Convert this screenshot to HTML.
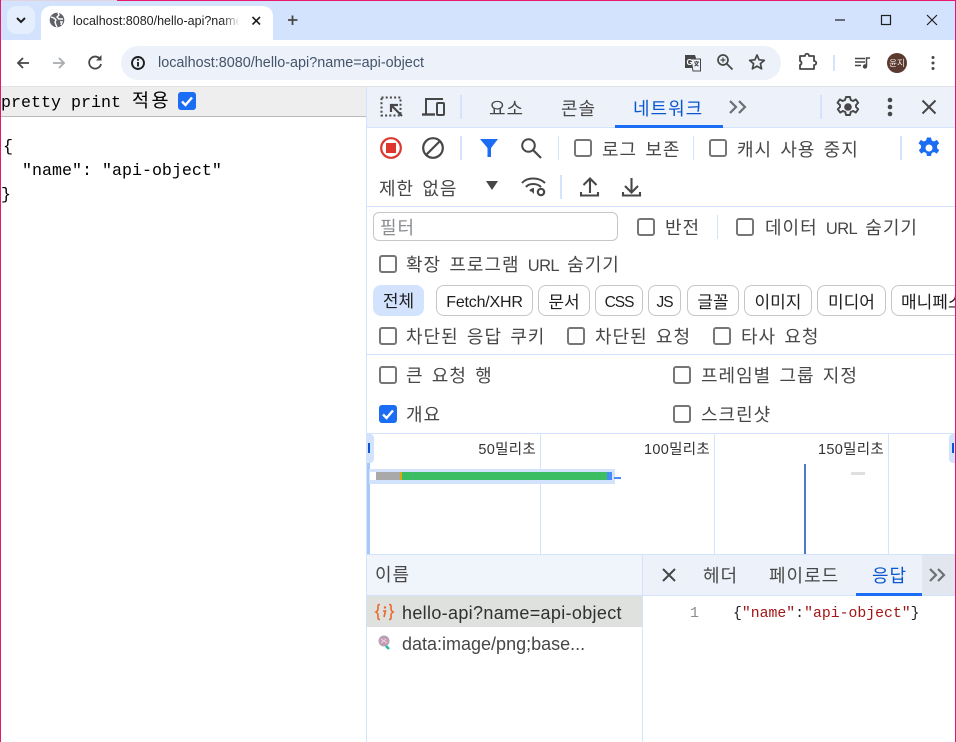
<!DOCTYPE html>
<html><head><meta charset="utf-8"><style>
html,body{margin:0;padding:0;background:#fff}
#r{position:relative;width:956px;height:742px;overflow:hidden;background:#fff;font-family:"Liberation Sans","Noto Sans CJK KR",sans-serif}
.b{position:absolute}
.t{position:absolute;white-space:nowrap;font-size:17px;line-height:24px;color:#474747;font-family:"Liberation Sans","Noto Sans CJK KR",sans-serif}
.h{font-size:18px;letter-spacing:1px;word-spacing:2.2px;margin-top:2px}
.u{font-size:16.5px;letter-spacing:-.6px}
.m{font-family:"Liberation Mono",monospace;font-size:16.67px;color:#000}
.c{position:absolute;width:14px;height:14px;border:2px solid #767676;border-radius:3px;background:#fff}
.k{position:absolute;width:18px;height:18px;border-radius:3px;background:#1b6ef3}
.s{position:absolute;width:2px;background:#d3e3fd}
.chip{position:absolute;top:285px;height:29px;border:1px solid #c4c7c5;border-radius:8px;text-align:center;font-size:17px;line-height:33px;color:#1f1f1f;white-space:nowrap;overflow:hidden;box-sizing:content-box}
.l{font-size:15.5px;letter-spacing:-1px}
.tm{font-size:14.5px;line-height:20px;color:#333;letter-spacing:.3px;top:440px}
svg{position:absolute;overflow:visible}
</style></head><body><div id="r">
<div class="b" style="left:0;top:0;width:956px;height:40px;background:#d3e3fd"></div>
<div class="b" style="left:0;top:0;width:117px;height:1px;background:#e2d3e0"></div>
<div class="b" style="left:117px;top:0;width:839px;height:1px;background:#e8186c"></div>
<div class="b" style="left:7px;top:6px;width:28px;height:28px;border-radius:9px;background:#e4eefc"></div>
<svg style="left:0;top:0" width="60" height="40"><path d="M17 18l4 4 4-4" fill="none" stroke="#1f1f1f" stroke-width="2"/></svg>
<div class="b" style="left:41px;top:6px;width:232px;height:40px;border-radius:10px 10px 0 0;background:#fff"></div>
<svg style="left:49px;top:12px" width="16" height="16" viewBox="0 0 16 16"><circle cx="8" cy="8" r="7.3" fill="#5f6368"/><path d="M2 5l3 1 2 2-1 2 1 3 1 2M9 1l1 2-2 2 2 2 4 0M11 10l2 0-1 3" fill="none" stroke="#fff" stroke-width="1.4"/></svg>
<div class="t" style="left:73px;top:10px;width:166px;overflow:hidden;font-size:12.5px;line-height:22px;color:#1f1f1f">localhost:8080/hello-api?name=api-object</div>
<div class="b" style="left:222px;top:10px;width:18px;height:22px;background:linear-gradient(90deg,rgba(255,255,255,0),#fff)"></div>
<svg style="left:250px;top:14px" width="14" height="14"><path d="M2.500 3l7.500 7.500M10 3l-7.500 7.500" stroke="#1f1f1f" stroke-width="1.600"/></svg>
<svg style="left:286px;top:13px" width="14" height="14"><path d="M6.500 2.500v9.500M2 7h9.500" stroke="#474747" stroke-width="1.800"/></svg>
<svg style="left:830px;top:0" width="126" height="40"><path d="M5 20h10" stroke="#1f1f1f" stroke-width="1.2"/><rect x="51.500" y="15.500" width="9" height="9" fill="none" stroke="#1f1f1f" stroke-width="1.2"/><path d="M97 15l10 10M107 15l-10 10" stroke="#1f1f1f" stroke-width="1.2"/></svg>
<div class="b" style="left:0;top:40px;width:956px;height:46px;background:#fff;border-radius:10px 10px 0 0"></div>
<div class="b" style="left:0;top:40px;width:10px;height:10px;background:#fff"></div>
<div class="b" style="left:121px;top:46px;width:660px;height:34px;border-radius:17px;background:#edf2fa"></div>
<svg style="left:15px;top:52px" width="100" height="22"><path d="M14 11H3M8 6l-5 5 5 5" fill="none" stroke="#474747" stroke-width="1.800"/><path d="M38 11h11M44 6l5 5-5 5" fill="none" stroke="#a8abaf" stroke-width="1.800"/><path d="M85 7a6 6 0 1 0 1 5" fill="none" stroke="#474747" stroke-width="1.800"/><path d="M81 8.500h5.500V3z" fill="#474747"/></svg>
<svg style="left:129px;top:54px" width="18" height="18"><circle cx="9" cy="9" r="6" fill="none" stroke="#1f1f1f" stroke-width="1.900"/><path d="M9 8v4.500" stroke="#1f1f1f" stroke-width="1.900"/><circle cx="9" cy="5.800" r="1.100" fill="#1f1f1f"/></svg>
<div class="t" style="left:158px;top:52px;font-size:14.4px;line-height:22px;color:#44546a">localhost:8080/hello-api?name=api-object</div>
<svg style="left:684px;top:54px" width="18" height="18"><path d="M1 1h10l1 3v10H1z" fill="#474747"/><path d="M7 5h9.500v12H9z" fill="#edf2fa" stroke="#474747"/><text x="2.500" y="11" font-size="8" font-family="Liberation Sans" font-weight="700" fill="#fff">G</text><path d="M10 8h5M12.500 7v1M14 8c-.5 2-2 3.500-3.500 4M11 9c.8 1.500 2 2.500 3.500 3" fill="none" stroke="#474747"/></svg>
<svg style="left:716px;top:53px" width="18" height="18"><circle cx="7" cy="7" r="5" fill="none" stroke="#474747" stroke-width="1.700"/><path d="M11 11l5.500 5.500" stroke="#474747" stroke-width="1.800"/><path d="M4.500 7h5M7 4.500v5" stroke="#474747" stroke-width="1.200"/></svg>
<svg style="left:748px;top:53px" width="18" height="18"><path d="M9 2l2.100 4.800 5.200.5-3.900 3.400 1.200 5.100L9 13.100l-4.600 2.700 1.200-5.100L1.700 7.300l5.200-.5z" fill="none" stroke="#474747" stroke-width="1.700" stroke-linejoin="round"/></svg>
<svg style="left:798px;top:53px" width="20" height="18"><path d="M2 3h5c0-3 4-3 4 0h5v5c3 0 3 4 0 4v4H2v-4c2-.5 2-3.500 0-4z" fill="none" stroke="#474747" stroke-width="1.800" stroke-linejoin="round"/></svg>
<div class="s" style="left:833px;top:55px;height:16px;background:#d3e3fd"></div>
<svg style="left:854px;top:57px" width="18" height="14"><path d="M1 1.500h10M1 5h10M1 8.500h6" stroke="#474747" stroke-width="1.500"/><path d="M12.500 9V1H16" fill="none" stroke="#474747" stroke-width="1.500"/><circle cx="11" cy="9.500" r="2.200" fill="#474747"/></svg>
<div class="b" style="left:887px;top:53px;width:20px;height:20px;border-radius:50%;background:#5b3a30;color:#f3e9e4;font-size:8.500px;line-height:20px;text-align:center">윤지</div>
<svg style="left:929px;top:55px" width="8" height="16"><circle cx="4" cy="2.500" r="1.500" fill="#474747"/><circle cx="4" cy="8" r="1.500" fill="#474747"/><circle cx="4" cy="13.500" r="1.500" fill="#474747"/></svg>
<div class="b" style="left:0;top:86px;width:956px;height:1px;background:#e0e2e6"></div>

<div class="b" style="left:1px;top:87px;width:365px;height:29px;background:#eee"></div>
<div class="b" style="left:1px;top:116px;width:365px;height:1px;background:#bbb"></div>
<div class="t m" style="left:1px;top:88px">pretty print <span style="font-family:'Noto Sans CJK KR',sans-serif;font-size:18.500px;letter-spacing:2.500px;margin-left:1px">적용</span></div>
<div class="k" style="left:178px;top:92px"></div>
<svg style="left:178px;top:92px" width="18" height="18"><path d="M4 9.500l3.500 3.500 6.500-7.500" fill="none" stroke="#fff" stroke-width="2.400"/></svg>
<div class="t m" style="left:3px;top:136px">{</div>
<div class="t m" style="left:22px;top:160px">"name": "api-object"</div>
<div class="t m" style="left:1px;top:184px">}</div>

<div class="b" style="left:366px;top:87px;width:1px;height:655px;background:#d3e3fd"></div>
<div class="b" style="left:367px;top:87px;width:588px;height:40px;background:#edf2fa"></div>
<div class="b" style="left:367px;top:127px;width:588px;height:1px;background:#d3e3fd"></div>
<svg style="left:380px;top:96px" width="24" height="22"><rect x="1.500" y="1.500" width="19" height="18" fill="none" stroke="#474747" stroke-width="2" stroke-dasharray="2 2.200"/><path d="M22 20L11 9M11 16V9h7" fill="none" stroke="#474747" stroke-width="2.200"/></svg>
<svg style="left:421px;top:97px" width="26" height="20"><path d="M5 17V2h17" fill="none" stroke="#474747" stroke-width="2"/><path d="M1 17.500h13" stroke="#474747" stroke-width="2.400"/><rect x="16" y="6" width="7" height="12" rx="1" fill="none" stroke="#474747" stroke-width="2"/></svg>
<div class="s" style="left:460px;top:95px;height:24px"></div>
<div class="t h" style="left:489px;top:95px">요소</div>
<div class="t h" style="left:561px;top:95px">콘솔</div>
<div class="t h" style="left:633px;top:95px;color:#0b57d0">네트워크</div>
<div class="b" style="left:615px;top:125px;width:108px;height:3px;background:#1b6ef3"></div>
<svg style="left:728px;top:99px" width="20" height="16"><path d="M2 2l6 6-6 6M11 2l6 6-6 6" fill="none" stroke="#6b6f76" stroke-width="2.200"/></svg>
<div class="s" style="left:820px;top:95px;height:24px"></div>
<svg style="left:836px;top:95px" width="24" height="24" viewBox="0 0 24 24"><path d="M10 2h4l.7 3 2.400 1 2.700-1.600 2.400 3.400-2.200 2.200v2l2.200 2.200-2.400 3.400-2.700-1.600-2.400 1-.7 3h-4l-.7-3-2.400-1-2.700 1.600-2.400-3.400 2.200-2.200v-2L1.500 7.800l2.400-3.400 2.700 1.600 2.400-1z" fill="none" stroke="#474747" stroke-width="1.900" stroke-linejoin="round"/><circle cx="12" cy="12" r="3.800" fill="#474747"/></svg>
<svg style="left:886px;top:97px" width="8" height="20"><circle cx="4" cy="3" r="2.300" fill="#474747"/><circle cx="4" cy="10" r="2.300" fill="#474747"/><circle cx="4" cy="17" r="2.300" fill="#474747"/></svg>
<svg style="left:921px;top:99px" width="16" height="16"><path d="M1.500 1.500l13 13M14.500 1.500l-13 13" stroke="#474747" stroke-width="2"/></svg>

<svg style="left:380px;top:137px" width="22" height="22"><circle cx="11" cy="11" r="9.800" fill="none" stroke="#dc362e" stroke-width="2.200"/><rect x="6" y="6" width="10" height="10" fill="#dc362e"/></svg>
<svg style="left:422px;top:137px" width="22" height="22"><circle cx="11" cy="11" r="9.800" fill="none" stroke="#474747" stroke-width="2.200"/><path d="M4 18L18 4" stroke="#474747" stroke-width="2.200"/></svg>
<div class="s" style="left:460px;top:136px;height:24px"></div>
<svg style="left:480px;top:139px" width="18" height="18"><path d="M0 0h18L11 9v9H7.500V9z" fill="#1b6ef3"/></svg>
<svg style="left:520px;top:137px" width="22" height="22"><circle cx="8.500" cy="8.500" r="6.300" fill="none" stroke="#474747" stroke-width="2"/><path d="M13 13l8 8" stroke="#474747" stroke-width="2.200"/></svg>
<div class="s" style="left:558px;top:136px;height:24px;width:1px"></div>
<div class="c" style="left:574px;top:139px"></div>
<div class="t h" style="left:602px;top:136px">로그 보존</div>
<div class="s" style="left:693px;top:136px;height:24px;width:1px"></div>
<div class="c" style="left:709px;top:139px"></div>
<div class="t h" style="left:737px;top:136px">캐시 사용 중지</div>
<div class="s" style="left:900px;top:136px;height:24px"></div>
<svg style="left:917px;top:136px" width="24" height="24" viewBox="0 0 24 24"><path d="M10 1.500h4l.7 3 2.400 1 2.700-1.600 2.400 3.400-2.200 2.200v2.500l2.200 2.200-2.400 3.400-2.700-1.600-2.400 1-.7 3h-4l-.7-3-2.400-1-2.700 1.600-2.400-3.400 2.200-2.200V9.500L1.500 7.300l2.400-3.400 2.700 1.600 2.400-1z" fill="#1b6ef3"/><circle cx="12" cy="12" r="3.500" fill="#fff"/></svg>
<div class="t h" style="left:379px;top:175px">제한 없음</div>
<svg style="left:486px;top:181px" width="14" height="10"><path d="M0 0h12L6 9z" fill="#474747"/></svg>
<svg style="left:521px;top:176px" width="26" height="22"><path d="M1 7C6 1 18 1 24 7M5 11c3-4 11-4 15 0M9 15c1-1 3-2 4-2" fill="none" stroke="#474747" stroke-width="2"/><path d="M10 15l3 3v-5z" fill="#474747"/><circle cx="20" cy="16" r="3.200" fill="none" stroke="#474747" stroke-width="2.200"/></svg>
<div class="s" style="left:560px;top:175px;height:24px"></div>
<svg style="left:580px;top:176px" width="20" height="22"><path d="M10 17V3M3.500 9L10 2.500 16.500 9M1 16v3.500h17V16" fill="none" stroke="#474747" stroke-width="2.100"/></svg>
<svg style="left:622px;top:176px" width="20" height="22"><path d="M9.500 2v14M3 10l6.500 6.500L16 10M1 16v3.500h17V16" fill="none" stroke="#474747" stroke-width="2.100"/></svg>
<div class="b" style="left:367px;top:206px;width:588px;height:1px;background:#d3e3fd"></div>

<div class="b" style="left:373px;top:212px;width:243px;height:27px;border:1px solid #c4c7c5;border-radius:6px"></div>
<div class="t h" style="left:380px;top:214px;color:#8a8d91">필터</div>
<div class="c" style="left:637px;top:218px"></div>
<div class="t h" style="left:665px;top:214px">반전</div>
<div class="b" style="left:717px;top:215px;width:1px;height:24px;background:#d3e3fd"></div>
<div class="c" style="left:736px;top:218px"></div>
<div class="t h" style="left:765px;top:214px">데이터 <span class="u">URL</span> 숨기기</div>
<div class="c" style="left:379px;top:255px"></div>
<div class="t h" style="left:406px;top:251px">확장 프로그램 <span class="u">URL</span> 숨기기</div>

<div class="b" style="left:373px;top:285px;width:51px;height:31px;border-radius:8px;background:#d3e3fd;text-align:center;font-size:17px;line-height:33px;color:#1f1f1f">전체</div>
<div class="chip" style="left:436px;width:95px;font-size:16px;letter-spacing:-.2px">Fetch/XHR</div>
<div class="chip" style="left:538px;width:50px">문서</div>
<div class="chip l" style="left:595px;width:46px">CSS</div>
<div class="chip l" style="left:648px;width:31px">JS</div>
<div class="chip" style="left:687px;width:50px">글꼴</div>
<div class="chip" style="left:744px;width:66px">이미지</div>
<div class="chip" style="left:817px;width:67px">미디어</div>
<div class="chip" style="left:891px;width:90px;text-align:left;text-indent:9px">매니페스트</div>

<div class="c" style="left:379px;top:327px"></div>
<div class="t h" style="left:406px;top:323px">차단된 응답 쿠키</div>
<div class="c" style="left:567px;top:327px"></div>
<div class="t h" style="left:595px;top:323px">차단된 요청</div>
<div class="c" style="left:713px;top:327px"></div>
<div class="t h" style="left:741px;top:323px">타사 요청</div>
<div class="b" style="left:367px;top:354px;width:588px;height:1px;background:#d3e3fd"></div>

<div class="c" style="left:379px;top:366px"></div>
<div class="t h" style="left:406px;top:362px">큰 요청 행</div>
<div class="c" style="left:673px;top:366px"></div>
<div class="t h" style="left:701px;top:362px">프레임별 그룹 지정</div>
<div class="k" style="left:379px;top:405px"></div>
<svg style="left:379px;top:405px" width="18" height="18"><path d="M4 9.500l3.500 3.500 6.500-7.500" fill="none" stroke="#fff" stroke-width="2.400"/></svg>
<div class="t h" style="left:406px;top:401px">개요</div>
<div class="c" style="left:673px;top:405px"></div>
<div class="t h" style="left:701px;top:401px">스크린샷</div>
<div class="b" style="left:367px;top:433px;width:588px;height:1px;background:#d3e3fd"></div>

<div class="b" style="left:540px;top:434px;width:1px;height:120px;background:#d3e3fd"></div>
<div class="b" style="left:714px;top:434px;width:1px;height:120px;background:#d3e3fd"></div>
<div class="b" style="left:888px;top:434px;width:1px;height:120px;background:#d3e3fd"></div>
<div class="t tm" style="right:420px">50밀리초</div>
<div class="t tm" style="right:246px">100밀리초</div>
<div class="t tm" style="right:72px">150밀리초</div>
<div class="b" style="left:367px;top:434px;width:7px;height:29px;background:#d3e3fd;border-radius:0 4px 4px 0"></div>
<div class="b" style="left:368px;top:443px;width:2px;height:10px;background:#0b57d0"></div>
<div class="b" style="left:949px;top:434px;width:6px;height:29px;background:#d3e3fd;border-radius:4px 0 0 4px"></div>
<div class="b" style="left:952px;top:443px;width:2px;height:10px;background:#0b57d0"></div>
<div class="b" style="left:367px;top:463px;width:3px;height:91px;background:#a8c7fa"></div>
<div class="b" style="left:369px;top:469px;width:246px;height:15px;background:#d3e3fd"></div>
<div class="b" style="left:370px;top:472px;width:6px;height:8px;background:#fff"></div>
<div class="b" style="left:376px;top:472px;width:24px;height:8px;background:#a9a9a9"></div>
<div class="b" style="left:400px;top:472px;width:2px;height:8px;background:#e0a80f"></div>
<div class="b" style="left:402px;top:472px;width:205px;height:8px;background:#3bbd63"></div>
<div class="b" style="left:607px;top:472px;width:5px;height:8px;background:#4a8cf7"></div>
<div class="b" style="left:614px;top:477px;width:7px;height:2px;background:#4a8cf7"></div>
<div class="b" style="left:851px;top:472px;width:14px;height:3px;background:#dfdfdf"></div>
<div class="b" style="left:804px;top:464px;width:2px;height:90px;background:#4f7cc9"></div>
<div class="b" style="left:367px;top:554px;width:588px;height:1px;background:#d3e3fd"></div>

<div class="b" style="left:367px;top:555px;width:275px;height:40px;background:#f0f4fb"></div>
<div class="t h" style="left:375px;top:561px">이름</div>
<div class="b" style="left:367px;top:595px;width:588px;height:1px;background:#d3e3fd"></div>
<div class="b" style="left:367px;top:596px;width:275px;height:31px;background:#dfe1de"></div>
<div class="b" style="left:642px;top:555px;width:1px;height:187px;background:#d3e3fd"></div>
<div class="b" style="left:643px;top:555px;width:312px;height:40px;background:#edf2fa"></div>
<div class="b" style="left:922px;top:555px;width:33px;height:40px;background:#e2e6ee"></div>
<svg style="left:661px;top:567px" width="16" height="16"><path d="M2 2l12 12M14 2L2 14" stroke="#474747" stroke-width="2"/></svg>
<div class="t h" style="left:703px;top:562px">헤더</div>
<div class="t h" style="left:769px;top:562px">페이로드</div>
<div class="t h" style="left:872px;top:562px;color:#0b57d0">응답</div>
<div class="b" style="left:856px;top:593px;width:66px;height:3px;background:#1b6ef3"></div>
<svg style="left:928px;top:567px" width="20" height="16"><path d="M2 2l6 6-6 6M10 2l6 6-6 6" fill="none" stroke="#6b6f76" stroke-width="2.200"/></svg>

<svg style="left:375px;top:603px" width="20" height="18"><path d="M5 1.500C2.500 1.500 3 3 3 5.500c0 2-.5 2.700-2 3.500 1.500.8 2 1.500 2 3.500 0 2.500-.5 4 2 4M14 1.500c2.500 0 2 1.500 2 4 0 2 .5 2.700 2 3.500-1.500.8-2 1.500-2 3.500 0 2.500.5 4-2 4M8 8h2.500L9 14" fill="none" stroke="#e8692a" stroke-width="1.600"/><circle cx="10" cy="4.500" r="1.200" fill="#e8692a"/></svg>
<div class="t" style="left:402px;top:601px;font-size:18px;letter-spacing:.33px;color:#303030">hello-api?name=api-object</div>
<svg style="left:377px;top:635px" width="16" height="16"><circle cx="7" cy="6" r="5" fill="#c99ab5" stroke="#a8a8a8"/><path d="M4 4l6 4M4 8l5-4" stroke="#e7d5e0"/><path d="M9 11l3 3" stroke="#29b6a6" stroke-width="2.400"/></svg>
<div class="t" style="left:402px;top:632px;font-size:18px;color:#474747">data:image/png;base...</div>
<div class="t" style="left:690px;top:602px;font-family:'Liberation Mono',monospace;font-size:15px;color:#8a8d91">1</div>
<div class="t" style="left:733px;top:602px;font-family:'Liberation Mono',monospace;font-size:14.800px;color:#1f1f1f">{<span style="color:#a31515">"name"</span>:<span style="color:#a31515">"api-object"</span>}</div>

<div class="b" style="left:0;top:0;width:1px;height:742px;background:#e8186c"></div>
<div class="b" style="left:955px;top:0;width:1px;height:742px;background:#d81b6a"></div>
</div></body></html>
